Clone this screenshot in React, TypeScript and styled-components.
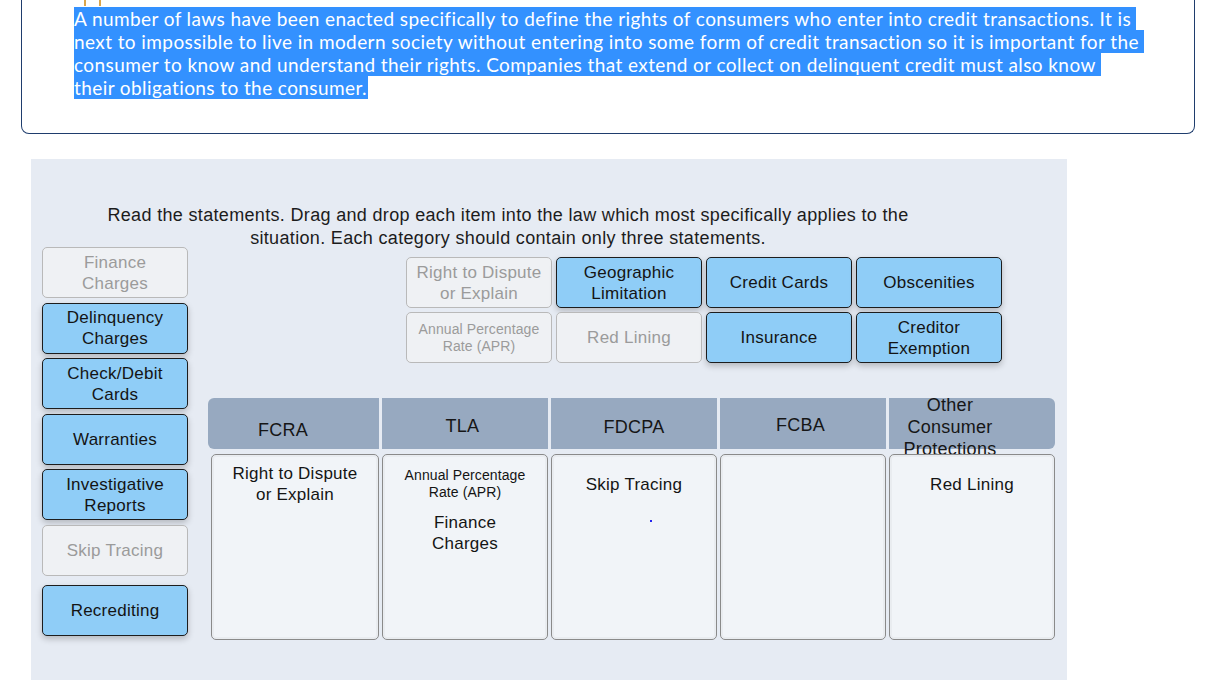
import React from "react";
import styled, { createGlobalStyle, css } from "styled-components";

const Global = createGlobalStyle`
  html, body { margin: 0; padding: 0; background: #ffffff; }
  body { font-family: "Liberation Sans", Arial, sans-serif; color: #1a1a1a; }
  * { box-sizing: border-box; }
`;

const Page = styled.div`
  width: 1211px;
  min-height: 697px;
`;

/* ---------- reading passage card ---------- */

const IntroCard = styled.section`
  margin: 0 16px 0 21px;
  border: 1px solid #1f3d6d;
  border-top: none;
  border-radius: 0 0 8px 8px;
  padding: 0 0 34px 0;
`;

const Ticks = styled.div`
  display: flex;
  gap: 13px;
  padding-left: 62px;
  height: 6px;
`;

const Tick = styled.span`
  width: 2px;
  height: 6px;
  background: #dca64a;
`;

const IntroText = styled.div`
  margin-top: 1px;
  padding-left: 52px;
  font-family: "Lato", "Open Sans", sans-serif;
  font-size: 19px;
  letter-spacing: 0.41px;
  line-height: 23px;
  color: #ffffff;
`;

const Selected = styled.span<{ $tail?: number }>`
  display: block;
  width: fit-content;
  background: #3391ff;
  white-space: nowrap;
  padding-right: ${(p) => p.$tail ?? 0}px;
`;

/* ---------- drag and drop activity ---------- */

const Activity = styled.section`
  margin: 25px 0 0 31px;
  width: 1036px;
  height: 521px;
  background: #e6ebf3;
  padding: 44px 0 0 11px;
  letter-spacing: 0.25px;
`;

const Instructions = styled.p`
  margin: 0 0 0 6px;
  padding-top: 1px;
  width: 920px;
  height: 44px;
  text-align: center;
  font-size: 18px;
  letter-spacing: 0.33px;
  line-height: 23px;
  color: #1c1c1c;
`;

const Body = styled.div`
  display: flex;
  align-items: flex-start;
`;

const Bank = styled.div`
  width: 146px;
  display: flex;
  flex-direction: column;
  gap: 4.6px;
`;

const Workspace = styled.div`
  margin-left: 20px;
  width: 847px;
`;

const Pool = styled.div`
  margin: 10px 0 0 198px;
  display: grid;
  grid-template-columns: repeat(4, 146px);
  grid-auto-rows: 51px;
  gap: 4px;
`;

const Tile = styled.div<{ $ghost?: boolean; $small?: boolean; $push?: number }>`
  height: 51px;
  display: flex;
  align-items: center;
  justify-content: center;
  text-align: center;
  padding: 0 5px;
  border-radius: 5px;
  font-size: ${(p) => (p.$small ? 14 : 17)}px;
  line-height: ${(p) => (p.$small ? 17 : 21)}px;
  letter-spacing: ${(p) => (p.$small ? 0.1 : 0.25)}px;
  margin-top: ${(p) => p.$push ?? 0}px;
  ${(p) =>
    p.$ghost
      ? css`
          background: #eff1f4;
          border: 1px solid #b9b9b9;
          color: #9b9b9b;
        `
      : css`
          background: #8fcdf7;
          border: 1px solid #1d1d1d;
          color: #141414;
          box-shadow: 0 3px 6px rgba(0, 0, 0, 0.22);
        `}
`;

const Categories = styled.div`
  margin-top: 35px;
  display: grid;
  grid-template-columns: 171px 166px 166px 166px 166px;
  grid-template-rows: 51px 186px;
  column-gap: 3px;
  row-gap: 5px;
`;

const Header = styled.div<{ $first?: boolean; $last?: boolean; $padR?: number; $padT?: number }>`
  background: #97a9c0;
  display: flex;
  align-items: center;
  justify-content: center;
  text-align: center;
  font-size: 18px;
  line-height: 22px;
  color: #161616;
  padding-right: ${(p) => p.$padR ?? 0}px;
  padding-top: ${(p) => p.$padT ?? 0}px;
  border-radius: ${(p) => (p.$first ? "6px 0 0 6px" : p.$last ? "0 6px 6px 0" : "0")};
`;

const Zone = styled.div<{ $inset?: number }>`
  margin-left: ${(p) => p.$inset ?? 0}px;
  background: #f1f4f8;
  border: 1px solid #8a8a8a;
  border-radius: 5px;
  box-shadow: inset 0 0 0 2px #e9ecf0;
  padding: 8px 6px;
  display: flex;
  flex-direction: column;
  gap: 7px;
`;

const Dropped = styled.div<{ $small?: boolean }>`
  height: 42px;
  display: flex;
  align-items: center;
  justify-content: center;
  text-align: center;
  font-size: ${(p) => (p.$small ? 14 : 17)}px;
  line-height: ${(p) => (p.$small ? 17 : 21)}px;
  letter-spacing: ${(p) => (p.$small ? 0.1 : 0.25)}px;
  color: #141414;
`;

const Caret = styled.span`
  width: 2px;
  height: 2px;
  background: #2424f0;
  margin: 8px 0 0 92px;
`;

type Item = { label: React.ReactNode; ghost?: boolean; small?: boolean; push?: number };

const bankItems: Item[] = [
  { label: <>Finance<br />Charges</>, ghost: true },
  { label: <>Delinquency<br />Charges</> },
  { label: <>Check/Debit<br />Cards</> },
  { label: "Warranties" },
  { label: <>Investigative<br />Reports</> },
  { label: "Skip Tracing", ghost: true },
  { label: "Recrediting", push: 4 },
];

const poolItems: Item[] = [
  { label: <>Right to Dispute<br />or Explain</>, ghost: true },
  { label: <>Geographic<br />Limitation</> },
  { label: "Credit Cards" },
  { label: "Obscenities" },
  { label: <>Annual Percentage<br />Rate (APR)</>, ghost: true, small: true },
  { label: "Red Lining", ghost: true },
  { label: "Insurance" },
  { label: <>Creditor<br />Exemption</> },
];

const headers = [
  { name: "FCRA", padR: 21, padT: 12 },
  { name: "TLA", padR: 5, padT: 4 },
  { name: "FDCPA", padR: 0, padT: 6 },
  { name: "FCBA", padR: 5, padT: 2 },
  { name: "Other Consumer Protections", padR: 44, padT: 7 },
];

export default function App() {
  return (
    <Page>
      <Global />
      <IntroCard>
        <Ticks>
          <Tick />
          <Tick />
        </Ticks>
        <IntroText>
          <Selected $tail={5}>
            A number of laws have been enacted specifically to define the rights of consumers who enter into credit transactions. It is
          </Selected>
          <Selected $tail={5}>
            next to impossible to live in modern society without entering into some form of credit transaction so it is important for the
          </Selected>
          <Selected $tail={5}>
            consumer to know and understand their rights. Companies that extend or collect on delinquent credit must also know
          </Selected>
          <Selected $tail={1}>their obligations to the consumer.</Selected>
        </IntroText>
      </IntroCard>

      <Activity>
        <Instructions>
          Read the statements. Drag and drop each item into the law which most specifically applies to the
          <br />
          situation. Each category should contain only three statements.
        </Instructions>
        <Body>
          <Bank>
            {bankItems.map((it, i) => (
              <Tile key={i} $ghost={it.ghost} $small={it.small} $push={it.push}>
                <span>{it.label}</span>
              </Tile>
            ))}
          </Bank>
          <Workspace>
            <Pool>
              {poolItems.map((it, i) => (
                <Tile key={i} $ghost={it.ghost} $small={it.small}>
                  <span>{it.label}</span>
                </Tile>
              ))}
            </Pool>
            <Categories>
              {headers.map((h, i) => (
                <Header
                  key={h.name}
                  $first={i === 0}
                  $last={i === headers.length - 1}
                  $padR={h.padR}
                  $padT={h.padT}
                >
                  <span>{h.name}</span>
                </Header>
              ))}
              <Zone $inset={3}>
                <Dropped>
                  <span>Right to Dispute<br />or Explain</span>
                </Dropped>
              </Zone>
              <Zone>
                <Dropped $small>
                  <span>Annual Percentage<br />Rate (APR)</span>
                </Dropped>
                <Dropped>
                  <span>Finance<br />Charges</span>
                </Dropped>
              </Zone>
              <Zone>
                <Dropped>
                  <span>Skip Tracing</span>
                </Dropped>
                <Caret />
              </Zone>
              <Zone />
              <Zone>
                <Dropped>
                  <span>Red Lining</span>
                </Dropped>
              </Zone>
            </Categories>
          </Workspace>
        </Body>
      </Activity>
    </Page>
  );
}
